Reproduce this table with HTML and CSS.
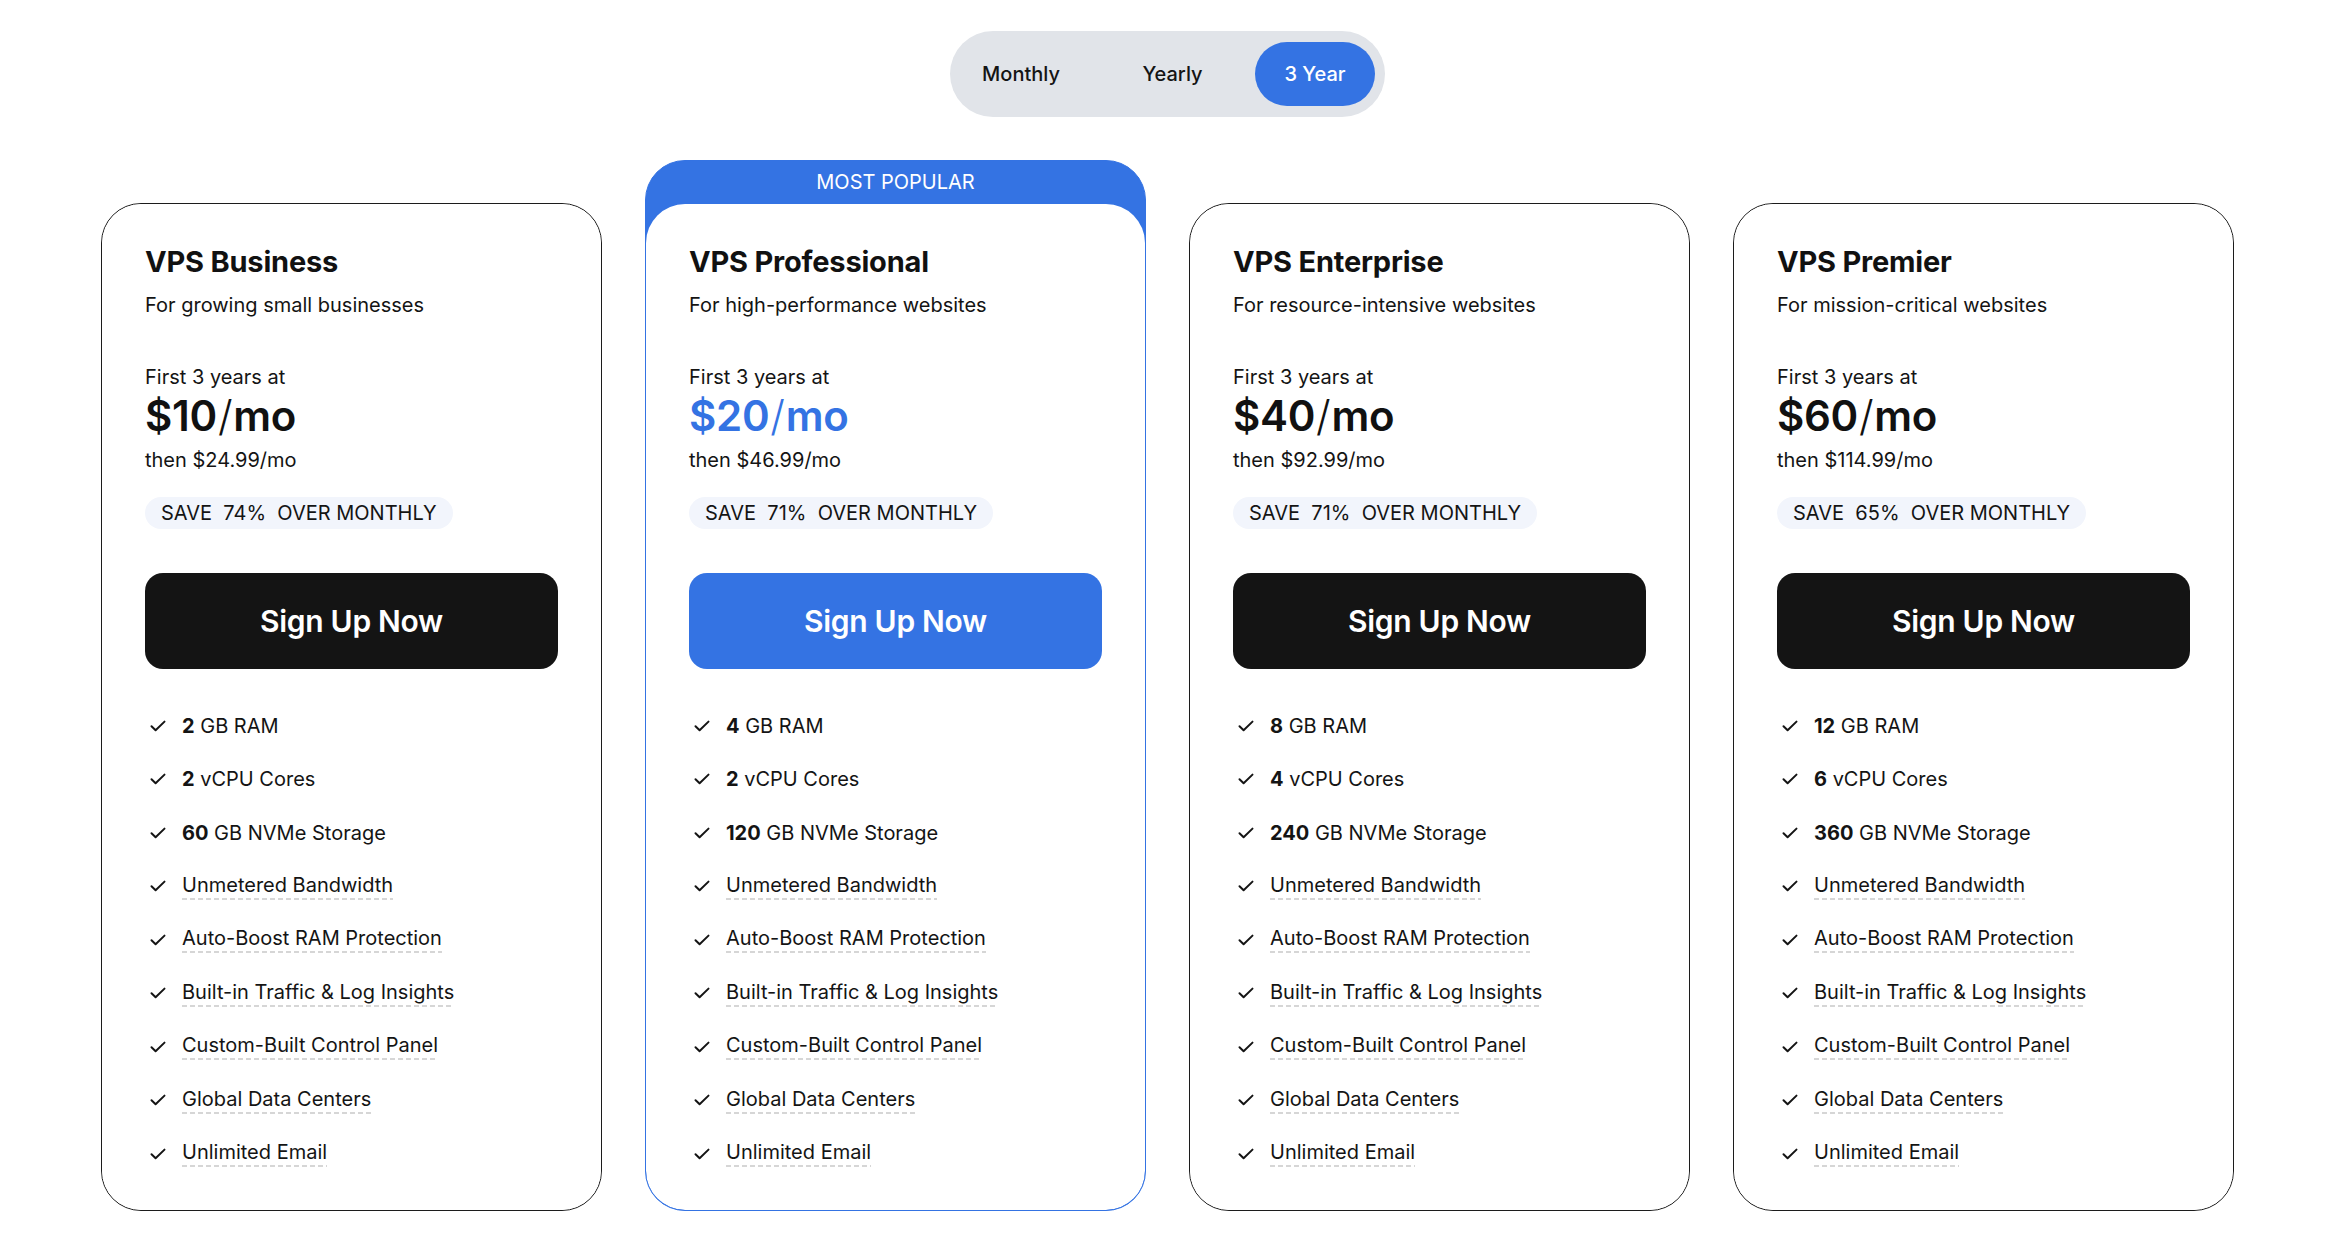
FILE: index.html
```html
<!DOCTYPE html>
<html lang="en">
<head>
<meta charset="utf-8">
<title>VPS Pricing</title>
<link rel="stylesheet" href="styles.css">
</head>
<body>
<main class="page">
  <div class="toggle-wrap">
    <div class="toggle">
      <button class="tab tab-monthly">Monthly</button>
      <button class="tab tab-yearly">Yearly</button>
      <button class="tab tab-3y active">3 Year</button>
    </div>
  </div>

  <section class="cards">
    <!-- Card 1 -->
    <article class="card">
      <div class="card-body">
        <h2 class="plan">VPS Business</h2>
        <p class="desc">For growing small businesses</p>
        <p class="first">First 3 years at</p>
        <p class="price">$10<span class="slash">/</span>mo</p>
        <p class="then">then $24.99/mo</p>
        <span class="save">SAVE&nbsp; 74%&nbsp; OVER MONTHLY</span>
        <a class="btn">Sign Up Now</a>
        <ul class="features">
          <li><svg class="chk" viewBox="0 0 16 12"><path d="M1.5 6.2 L5.6 10.2 L14.5 1.6"/></svg><span><b>2</b> GB RAM</span></li>
          <li><svg class="chk" viewBox="0 0 16 12"><path d="M1.5 6.2 L5.6 10.2 L14.5 1.6"/></svg><span><b>2</b> vCPU Cores</span></li>
          <li><svg class="chk" viewBox="0 0 16 12"><path d="M1.5 6.2 L5.6 10.2 L14.5 1.6"/></svg><span><b>60</b> GB NVMe Storage</span></li>
          <li><svg class="chk" viewBox="0 0 16 12"><path d="M1.5 6.2 L5.6 10.2 L14.5 1.6"/></svg><span class="dash">Unmetered Bandwidth</span></li>
          <li><svg class="chk" viewBox="0 0 16 12"><path d="M1.5 6.2 L5.6 10.2 L14.5 1.6"/></svg><span class="dash">Auto-Boost RAM Protection</span></li>
          <li><svg class="chk" viewBox="0 0 16 12"><path d="M1.5 6.2 L5.6 10.2 L14.5 1.6"/></svg><span class="dash">Built-in Traffic &amp; Log Insights</span></li>
          <li><svg class="chk" viewBox="0 0 16 12"><path d="M1.5 6.2 L5.6 10.2 L14.5 1.6"/></svg><span class="dash">Custom-Built Control Panel</span></li>
          <li><svg class="chk" viewBox="0 0 16 12"><path d="M1.5 6.2 L5.6 10.2 L14.5 1.6"/></svg><span class="dash">Global Data Centers</span></li>
          <li><svg class="chk" viewBox="0 0 16 12"><path d="M1.5 6.2 L5.6 10.2 L14.5 1.6"/></svg><span class="dash">Unlimited Email</span></li>
        </ul>
      </div>
    </article>

    <!-- Card 2 -->
    <article class="card popular">
      <div class="label">MOST POPULAR</div>
      <div class="card-body">
        <h2 class="plan">VPS Professional</h2>
        <p class="desc">For high-performance websites</p>
        <p class="first">First 3 years at</p>
        <p class="price blue">$20<span class="slash">/</span>mo</p>
        <p class="then">then $46.99/mo</p>
        <span class="save">SAVE&nbsp; 71%&nbsp; OVER MONTHLY</span>
        <a class="btn btn-blue">Sign Up Now</a>
        <ul class="features">
          <li><svg class="chk" viewBox="0 0 16 12"><path d="M1.5 6.2 L5.6 10.2 L14.5 1.6"/></svg><span><b>4</b> GB RAM</span></li>
          <li><svg class="chk" viewBox="0 0 16 12"><path d="M1.5 6.2 L5.6 10.2 L14.5 1.6"/></svg><span><b>2</b> vCPU Cores</span></li>
          <li><svg class="chk" viewBox="0 0 16 12"><path d="M1.5 6.2 L5.6 10.2 L14.5 1.6"/></svg><span><b>120</b> GB NVMe Storage</span></li>
          <li><svg class="chk" viewBox="0 0 16 12"><path d="M1.5 6.2 L5.6 10.2 L14.5 1.6"/></svg><span class="dash">Unmetered Bandwidth</span></li>
          <li><svg class="chk" viewBox="0 0 16 12"><path d="M1.5 6.2 L5.6 10.2 L14.5 1.6"/></svg><span class="dash">Auto-Boost RAM Protection</span></li>
          <li><svg class="chk" viewBox="0 0 16 12"><path d="M1.5 6.2 L5.6 10.2 L14.5 1.6"/></svg><span class="dash">Built-in Traffic &amp; Log Insights</span></li>
          <li><svg class="chk" viewBox="0 0 16 12"><path d="M1.5 6.2 L5.6 10.2 L14.5 1.6"/></svg><span class="dash">Custom-Built Control Panel</span></li>
          <li><svg class="chk" viewBox="0 0 16 12"><path d="M1.5 6.2 L5.6 10.2 L14.5 1.6"/></svg><span class="dash">Global Data Centers</span></li>
          <li><svg class="chk" viewBox="0 0 16 12"><path d="M1.5 6.2 L5.6 10.2 L14.5 1.6"/></svg><span class="dash">Unlimited Email</span></li>
        </ul>
      </div>
    </article>

    <!-- Card 3 -->
    <article class="card">
      <div class="card-body">
        <h2 class="plan">VPS Enterprise</h2>
        <p class="desc">For resource-intensive websites</p>
        <p class="first">First 3 years at</p>
        <p class="price">$40<span class="slash">/</span>mo</p>
        <p class="then">then $92.99/mo</p>
        <span class="save">SAVE&nbsp; 71%&nbsp; OVER MONTHLY</span>
        <a class="btn">Sign Up Now</a>
        <ul class="features">
          <li><svg class="chk" viewBox="0 0 16 12"><path d="M1.5 6.2 L5.6 10.2 L14.5 1.6"/></svg><span><b>8</b> GB RAM</span></li>
          <li><svg class="chk" viewBox="0 0 16 12"><path d="M1.5 6.2 L5.6 10.2 L14.5 1.6"/></svg><span><b>4</b> vCPU Cores</span></li>
          <li><svg class="chk" viewBox="0 0 16 12"><path d="M1.5 6.2 L5.6 10.2 L14.5 1.6"/></svg><span><b>240</b> GB NVMe Storage</span></li>
          <li><svg class="chk" viewBox="0 0 16 12"><path d="M1.5 6.2 L5.6 10.2 L14.5 1.6"/></svg><span class="dash">Unmetered Bandwidth</span></li>
          <li><svg class="chk" viewBox="0 0 16 12"><path d="M1.5 6.2 L5.6 10.2 L14.5 1.6"/></svg><span class="dash">Auto-Boost RAM Protection</span></li>
          <li><svg class="chk" viewBox="0 0 16 12"><path d="M1.5 6.2 L5.6 10.2 L14.5 1.6"/></svg><span class="dash">Built-in Traffic &amp; Log Insights</span></li>
          <li><svg class="chk" viewBox="0 0 16 12"><path d="M1.5 6.2 L5.6 10.2 L14.5 1.6"/></svg><span class="dash">Custom-Built Control Panel</span></li>
          <li><svg class="chk" viewBox="0 0 16 12"><path d="M1.5 6.2 L5.6 10.2 L14.5 1.6"/></svg><span class="dash">Global Data Centers</span></li>
          <li><svg class="chk" viewBox="0 0 16 12"><path d="M1.5 6.2 L5.6 10.2 L14.5 1.6"/></svg><span class="dash">Unlimited Email</span></li>
        </ul>
      </div>
    </article>

    <!-- Card 4 -->
    <article class="card">
      <div class="card-body">
        <h2 class="plan">VPS Premier</h2>
        <p class="desc">For mission-critical websites</p>
        <p class="first">First 3 years at</p>
        <p class="price">$60<span class="slash">/</span>mo</p>
        <p class="then">then $114.99/mo</p>
        <span class="save">SAVE&nbsp; 65%&nbsp; OVER MONTHLY</span>
        <a class="btn">Sign Up Now</a>
        <ul class="features">
          <li><svg class="chk" viewBox="0 0 16 12"><path d="M1.5 6.2 L5.6 10.2 L14.5 1.6"/></svg><span><b>12</b> GB RAM</span></li>
          <li><svg class="chk" viewBox="0 0 16 12"><path d="M1.5 6.2 L5.6 10.2 L14.5 1.6"/></svg><span><b>6</b> vCPU Cores</span></li>
          <li><svg class="chk" viewBox="0 0 16 12"><path d="M1.5 6.2 L5.6 10.2 L14.5 1.6"/></svg><span><b>360</b> GB NVMe Storage</span></li>
          <li><svg class="chk" viewBox="0 0 16 12"><path d="M1.5 6.2 L5.6 10.2 L14.5 1.6"/></svg><span class="dash">Unmetered Bandwidth</span></li>
          <li><svg class="chk" viewBox="0 0 16 12"><path d="M1.5 6.2 L5.6 10.2 L14.5 1.6"/></svg><span class="dash">Auto-Boost RAM Protection</span></li>
          <li><svg class="chk" viewBox="0 0 16 12"><path d="M1.5 6.2 L5.6 10.2 L14.5 1.6"/></svg><span class="dash">Built-in Traffic &amp; Log Insights</span></li>
          <li><svg class="chk" viewBox="0 0 16 12"><path d="M1.5 6.2 L5.6 10.2 L14.5 1.6"/></svg><span class="dash">Custom-Built Control Panel</span></li>
          <li><svg class="chk" viewBox="0 0 16 12"><path d="M1.5 6.2 L5.6 10.2 L14.5 1.6"/></svg><span class="dash">Global Data Centers</span></li>
          <li><svg class="chk" viewBox="0 0 16 12"><path d="M1.5 6.2 L5.6 10.2 L14.5 1.6"/></svg><span class="dash">Unlimited Email</span></li>
        </ul>
      </div>
    </article>
  </section>
</main>
</body>
</html>
```

FILE: styles.css
```css
* { box-sizing: border-box; }

html, body {
  margin: 0;
  padding: 0;
  background: #ffffff;
}

body {
  font-family: Inter, "Noto Sans", "Liberation Sans", sans-serif;
  color: #141414;
}

.page {
  padding-top: 31px;
  padding-right: 3px;
}

/* Billing toggle */
.toggle-wrap {
  display: flex;
  justify-content: center;
}

.toggle {
  display: flex;
  align-items: center;
  background: #e1e4e9;
  border-radius: 43px;
  padding: 11px 10px;
}

.tab {
  height: 64px;
  border: 0;
  background: transparent;
  border-radius: 32px;
  font-family: inherit;
  font-size: 20px;
  font-weight: 500;
  color: #141414;
  padding: 0;
  cursor: pointer;
}

.tab-monthly { width: 122px; }
.tab-yearly { width: 143px; margin-left: 19px; }
.tab-3y { width: 120px; margin-left: 11px; }

.tab.active {
  background: #3473e3;
  color: #ffffff;
}

/* Cards grid */
.cards {
  display: grid;
  grid-template-columns: repeat(4, 501px);
  column-gap: 43px;
  justify-content: center;
  align-items: end;
  margin-top: 43px;
}

.card {
  border: 1px solid #1c1c1c;
  border-radius: 40px;
  overflow: hidden;
  background: #ffffff;
}

.card.popular {
  border-color: #3473e3;
  background: #3473e3;
}

.label {
  height: 43px;
  display: flex;
  align-items: center;
  justify-content: center;
  color: #ffffff;
  font-size: 20px;
  font-weight: 400;
  padding-bottom: 2px;
}

.card-body {
  background: #ffffff;
  border-radius: 39px;
  padding: 41px 43px 40px;
  display: flex;
  flex-direction: column;
  align-items: flex-start;
}

.plan {
  margin: 0;
  font-size: 29px;
  line-height: 34px;
  font-weight: 700;
  color: #111111;
  letter-spacing: -0.2px;
}

.desc {
  margin: 11.5px 0 0;
  font-size: 20px;
  line-height: 28px;
  color: #141414;
}

.first {
  margin: 44px 0 0;
  font-size: 20px;
  line-height: 28px;
}

.price {
  margin: 5px 0 0;
  font-size: 42px;
  line-height: 40px;
  font-weight: 600;
  color: #111111;
  letter-spacing: -0.3px;
}

.price .slash {
  font-weight: 300;
  margin: 0 1px;
}

.price.blue {
  color: #3473e3;
}

.then {
  margin: 10px 0 0;
  font-size: 20px;
  line-height: 28px;
}

.save {
  margin-top: 23.5px;
  height: 32px;
  line-height: 32px;
  padding: 0 16px;
  border-radius: 16px;
  background: #f2f5fc;
  font-size: 20px;
  font-weight: 400;
  color: #141414;
}

.btn {
  display: flex;
  align-items: center;
  justify-content: center;
  align-self: stretch;
  margin-top: 43.5px;
  height: 96px;
  border-radius: 18px;
  background: #141414;
  color: #ffffff;
  font-size: 30px;
  font-weight: 600;
  letter-spacing: -0.3px;
  text-decoration: none;
}

.btn-blue {
  background: #3473e3;
}

.features {
  list-style: none;
  margin: 41px 0 0;
  padding: 0;
  display: flex;
  flex-direction: column;
  row-gap: 21.5px;
}

.features li {
  display: flex;
  align-items: center;
  height: 32px;
  font-size: 20px;
  line-height: 32px;
  color: #141414;
}

.features b {
  font-weight: 700;
}

.chk {
  width: 16px;
  height: 12px;
  margin-left: 5px;
  margin-right: 16px;
  flex: none;
}

.chk path {
  fill: none;
  stroke: #141414;
  stroke-width: 2;
  stroke-linecap: round;
  stroke-linejoin: round;
}

.dash {
  line-height: 24px;
  padding-bottom: 3px;
  background-image: linear-gradient(90deg, #d6d6d6 0 5px, transparent 5px 8px);
  background-size: 8px 2px;
  background-repeat: repeat-x;
  background-position: 0 100%;
}
```
